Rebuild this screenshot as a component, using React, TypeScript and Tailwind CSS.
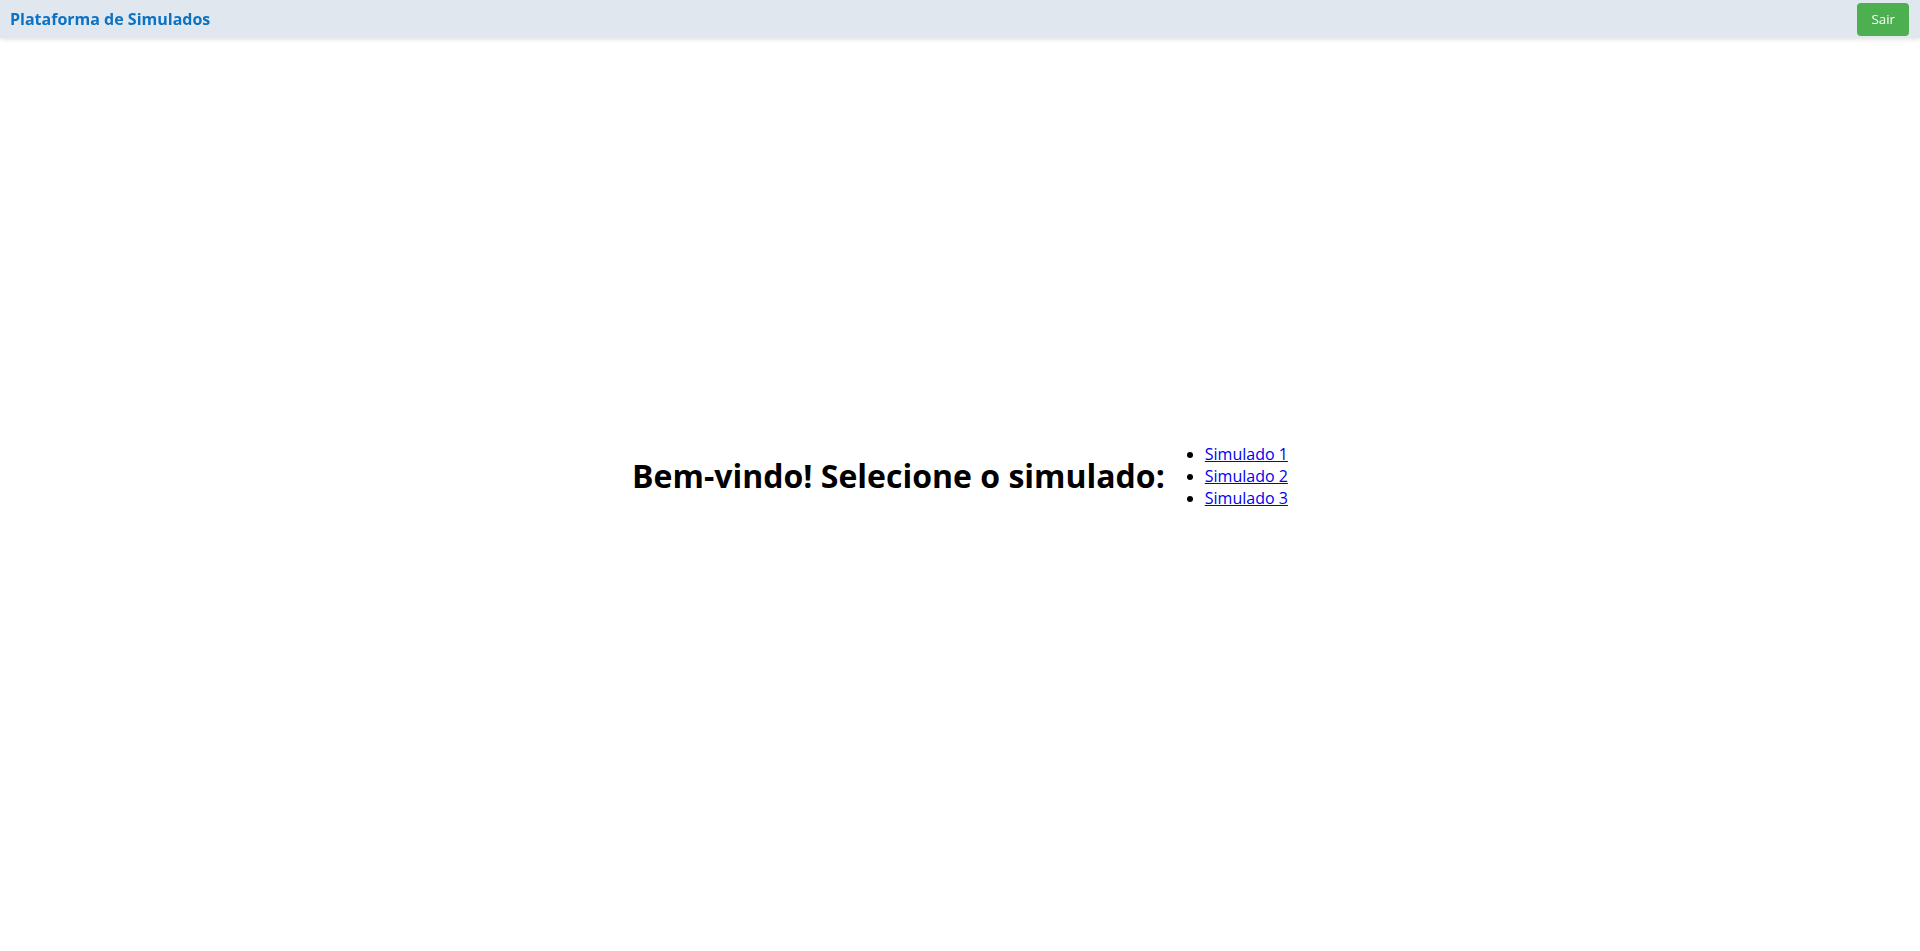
export default function App() {
  return (
    <div className="min-h-screen bg-white text-black" style={{ fontFamily: '"Open Sans", sans-serif' }}>
      <header className="fixed top-0 left-0 right-0 h-[38px] bg-[#e0e7ef] shadow-[0_2px_4px_rgba(0,0,0,0.1)] flex items-center justify-between pl-[10px] pr-[11px] z-10">
        <span className="text-base leading-[normal] font-bold text-[#0b72c4]">Plataforma de Simulados</span>
        <button className="h-[33px] px-[14px] rounded bg-[#4caf50] text-white text-[13.33px] leading-[normal]">Sair</button>
      </header>

      <main className="min-h-screen flex items-center justify-center">
        <h1 className="text-[32px] leading-[normal] font-bold my-[21px]">Bem-vindo! Selecione o simulado:</h1>
        <ul className="list-disc pl-10 text-base leading-[normal]">
          <li><a href="#" className="text-[#0000ee] underline">Simulado 1</a></li>
          <li><a href="#" className="text-[#0000ee] underline">Simulado 2</a></li>
          <li><a href="#" className="text-[#0000ee] underline">Simulado 3</a></li>
        </ul>
      </main>
    </div>
  );
}
